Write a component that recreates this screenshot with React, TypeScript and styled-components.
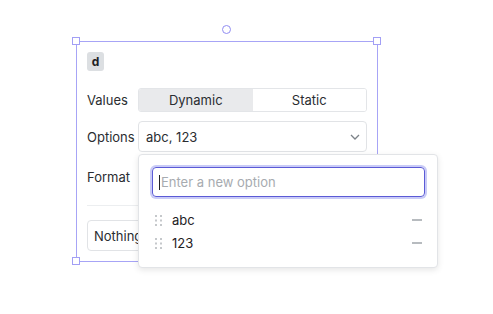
import React from "react";
import styled, { createGlobalStyle } from "styled-components";

const Global = createGlobalStyle`
  html, body { margin: 0; padding: 0; background: #ffffff; }
  body { font-family: Inter, "Noto Sans", sans-serif; color: #1e2124; }
  * { box-sizing: border-box; }
`;

const Canvas = styled.div`
  width: 493px;
  height: 314px;
  padding: 41px 0 0 76px;
  position: relative;
  overflow: hidden;
`;

const Frame = styled.div`
  position: relative;
  width: 302px;
  height: 221px;
  border: 1px solid #a7a4f6;
  padding: 10px 10px 0 10px;
  display: flex;
  flex-direction: column;
`;

const Handle = styled.div<{ $x: number; $y: number }>`
  position: absolute;
  width: 8px;
  height: 8px;
  background: #fff;
  border: 1px solid #a29ff5;
  left: ${(p) => p.$x}px;
  top: ${(p) => p.$y}px;
`;

const Rotate = styled.div`
  position: absolute;
  width: 9px;
  height: 9px;
  border-radius: 50%;
  border: 1px solid #918df2;
  background: #fff;
  left: 145px;
  top: -17px;
`;

const Badge = styled.div`
  width: 17px;
  height: 19px;
  border-radius: 3px;
  background: #dcdfe2;
  display: flex;
  align-items: center;
  justify-content: center;
  font-weight: 700;
  font-size: 12px;
  color: #1e2124;
`;

const Row = styled.div<{ $mt: number; $h: number }>`
  display: flex;
  align-items: center;
  margin-top: ${(p) => p.$mt}px;
  height: ${(p) => p.$h}px;
`;

const Label = styled.div`
  width: 51px;
  font-size: 13px;
  color: #2a2d31;
`;

const Segmented = styled.div`
  flex: 1;
  display: flex;
  height: 100%;
  border: 1px solid #e3e5e8;
  border-radius: 3px;
  overflow: hidden;
`;

const Segment = styled.div<{ $active?: boolean }>`
  flex: 1;
  display: flex;
  align-items: center;
  justify-content: center;
  font-size: 13px;
  color: #2a2d31;
  background: ${(p) => (p.$active ? "#e9eaec" : "#fff")};
`;

const Select = styled.div`
  flex: 1;
  height: 100%;
  border: 1px solid #e1e3e6;
  border-radius: 4px;
  display: flex;
  align-items: center;
  justify-content: space-between;
  padding: 0 6px 0 7px;
  font-size: 13px;
  color: #2a2d31;
`;

const Divider = styled.div`
  height: 1px;
  background: #eceef0;
  margin-top: 13px;
`;

const NothingBtn = styled.div`
  margin-top: 14px;
  width: 150px;
  height: 31px;
  border: 1px solid #e1e3e6;
  border-radius: 4px;
  display: flex;
  align-items: center;
  padding-left: 6px;
  font-size: 13px;
  color: #2a2d31;
`;

const Popover = styled.div`
  position: absolute;
  left: 138px;
  top: 154px;
  width: 300px;
  height: 114px;
  background: #fff;
  border: 1px solid #e2e4e7;
  border-radius: 4px;
  box-shadow: 0 2px 6px rgba(0, 0, 0, 0.1);
  padding: 12px 12px 0 13px;
  display: flex;
  flex-direction: column;
`;

const InputWrap = styled.div`
  height: 30px;
  border-radius: 4px;
  border: 1px solid #5b5bd6;
  box-shadow: 0 0 0 2px #c9cbf7;
  display: flex;
  align-items: center;
  padding-left: 6px;
  font-size: 13px;
  color: #a7abb0;
`;

const Caret = styled.span`
  width: 1px;
  height: 15px;
  background: #1e2124;
  margin-right: 1px;
`;

const List = styled.div`
  margin-top: 13px;
  display: flex;
  flex-direction: column;
  gap: 3px;
`;

const Item = styled.div`
  display: flex;
  align-items: center;
  height: 20px;
  padding-left: 3px;
  font-size: 13px;
  color: #1e2124;
`;

const ItemText = styled.span`
  flex: 1;
  margin-left: 10px;
`;

const Minus = styled.div`
  width: 10px;
  height: 1.5px;
  background: #b7bbbf;
  margin-right: 3px;
`;

const Grip = () => (
  <svg width="7" height="11" viewBox="0 0 7 11">
    {[0, 4.5, 9].map((y) =>
      [0, 5].map((x) => (
        <rect key={`${x}-${y}`} x={x} y={y} width="2" height="2" fill="#c5c8cb" />
      ))
    )}
  </svg>
);

const Chevron = () => (
  <svg width="10" height="6" viewBox="0 0 10 6">
    <path d="M1 1l4 4 4-4" fill="none" stroke="#7c8288" strokeWidth="1.3" />
  </svg>
);

export default function App() {
  return (
    <Canvas>
      <Global />
      <Frame>
        <Handle $x={-5} $y={-5} />
        <Handle $x={296} $y={-5} />
        <Handle $x={-5} $y={215} />
        <Rotate />
        <Badge>d</Badge>
        <Row $mt={17} $h={24}>
          <Label>Values</Label>
          <Segmented>
            <Segment $active>Dynamic</Segment>
            <Segment>Static</Segment>
          </Segmented>
        </Row>
        <Row $mt={9} $h={31}>
          <Label>Options</Label>
          <Select>
            abc, 123
            <Chevron />
          </Select>
        </Row>
        <Row $mt={9} $h={31}>
          <Label>Format</Label>
          <Select>
            <span />
            <Chevron />
          </Select>
        </Row>
        <Divider />
        <NothingBtn>Nothing</NothingBtn>
      </Frame>
      <Popover>
        <InputWrap>
          <Caret />
          Enter a new option
        </InputWrap>
        <List>
          <Item>
            <Grip />
            <ItemText>abc</ItemText>
            <Minus />
          </Item>
          <Item>
            <Grip />
            <ItemText>123</ItemText>
            <Minus />
          </Item>
        </List>
      </Popover>
    </Canvas>
  );
}
